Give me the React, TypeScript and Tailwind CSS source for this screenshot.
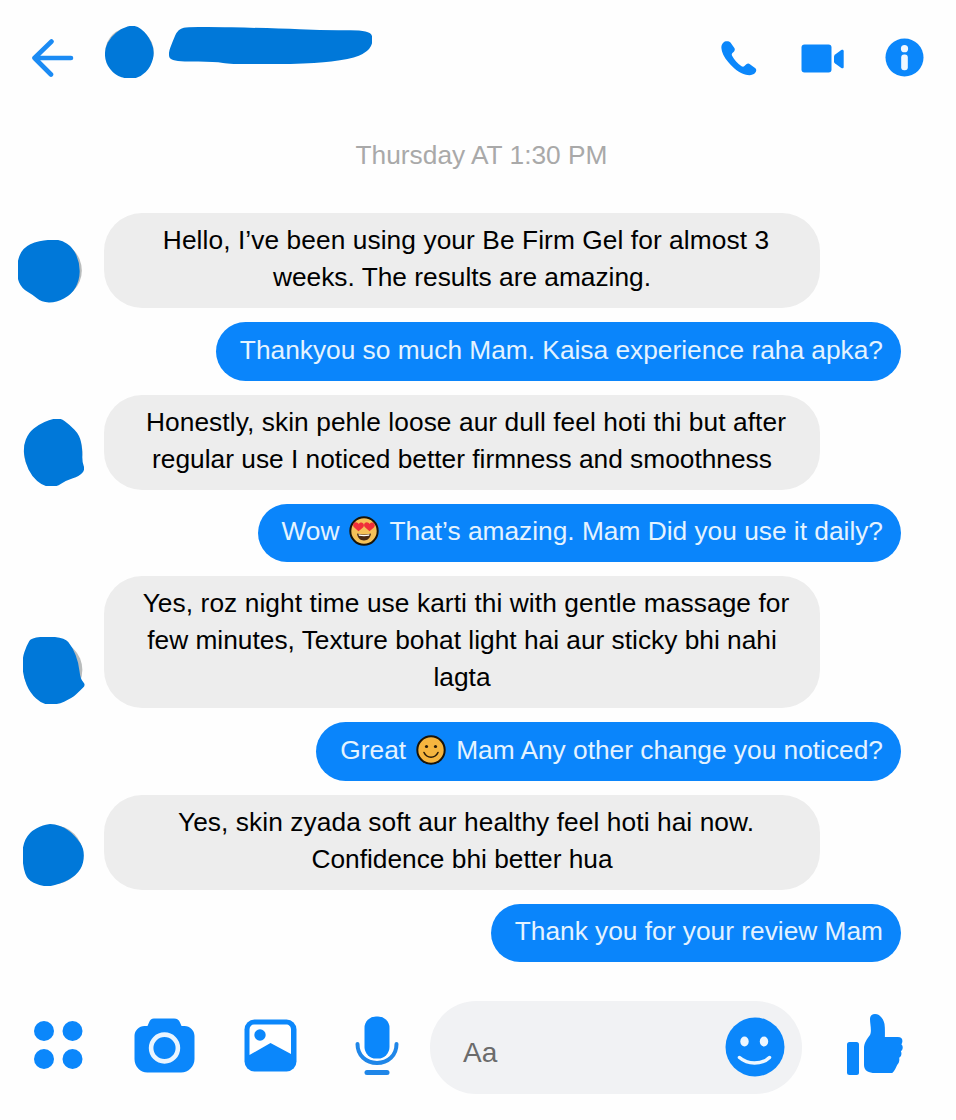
import React from "react";

const BLUE = "#0b87fb";
const INK = "#0078d9";
type P = [number, number];

function smooth(pts: P[]) {
  const mid = (a: P, b: P): P => [(a[0] + b[0]) / 2, (a[1] + b[1]) / 2];
  const n = pts.length;
  const s = mid(pts[n - 1], pts[0]);
  let d = `M${s[0]} ${s[1]}`;
  for (let i = 0; i < n; i++) {
    const m = mid(pts[i], pts[(i + 1) % n]);
    d += `Q${pts[i][0]} ${pts[i][1]} ${m[0]} ${m[1]}`;
  }
  return d + "Z";
}

function Blob({ pts, vb, w, h, ring, ml = 0, mt = 0 }: { pts: P[]; vb: string; w: number; h: number; ring?: [number, number, number]; ml?: number; mt?: number }) {
  return (
    <svg width={w} height={h} viewBox={vb} className="block shrink-0" style={{ marginLeft: ml, marginTop: mt }}>
      {ring && <circle cx={ring[0]} cy={ring[1]} r={ring[2]} fill="#b9bcbc" />}
      <path d={smooth(pts)} fill={INK} />
    </svg>
  );
}

function Back() {
  return (
    <svg width="42" height="38" viewBox="0 0 42 38" fill="none" stroke="#1b8bf4" strokeWidth="4.600" strokeLinecap="round" strokeLinejoin="round">
      <path d="M2.500 19H39M19.500 2.500 2.500 19 19 35.500" />
    </svg>
  );
}

function Phone() {
  return (
    <svg width="36" height="37" viewBox="0 0 38 38" fill={BLUE}>
      <path d="M5 .9C2.500 1.600.2 4.500.4 8c.3 4.500 2.600 9.500 7.400 15 5.400 6.600 11.600 11.500 18.500 13.200 4 1 7.600.4 9.600-1.800 1.600-1.600 1.800-3.600.4-5l-5.800-4.400c-1.200-.9-2.600-.8-3.800.2l-2 1.800c-.9.800-2 .8-3 .1-4.400-3-7.600-6.400-10-11-.5-1-.4-2 .4-2.800l1.700-1.800c1-1.100 1-2.400.3-3.600L10 2.200C8.800.8 6.800.4 5 .9Z" />
    </svg>
  );
}

function Video() {
  return (
    <svg width="44" height="30" viewBox="0 0 44 30" fill={BLUE}>
      <rect x="0.500" y="0.500" width="30" height="28" rx="3" />
      <path d="M33 12.600c0-.9.400-1.600 1.100-2.100l6.200-4.400c1.300-.9 2.400-.3 2.400 1.200v15.400c0 1.500-1.100 2.100-2.400 1.200l-6.200-4.400c-.7-.5-1.100-1.200-1.100-2.100Z" />
    </svg>
  );
}

function Info() {
  return (
    <svg width="39" height="39" viewBox="0 0 40 40" className="block">
      <circle cx="20" cy="20" r="19.500" fill={BLUE} />
      <circle cx="20" cy="11" r="3.700" fill="#eef7ff" />
      <rect x="16.600" y="17" width="6.800" height="16" rx="3" fill="#eef7ff" />
    </svg>
  );
}

function Dots() {
  return (
    <svg width="50" height="50" viewBox="0 0 50 50" fill={BLUE} className="block">
      <circle cx="10" cy="10" r="10" />
      <circle cx="38.500" cy="10" r="10" />
      <circle cx="10" cy="38" r="10" />
      <circle cx="38.500" cy="38" r="10" />
    </svg>
  );
}

function Camera() {
  return (
    <svg width="61" height="55" viewBox="0 0 61 55" className="block">
      <path fill={BLUE} d="M20 .5h20c3 0 5 1.500 6 4l1.500 3.500h3c5.500 0 10 4.500 10 10v23c0 7.500-6 13.500-13.500 13.500H13.500C6 54.500.5 48.500.5 41V18C.5 12.500 5 8 10.500 8h3L15 4.500C16 2 17.500.5 20 .5Z" />
      <circle cx="30.500" cy="30" r="13.400" fill="none" stroke="#eaf5ff" strokeWidth="4.600" />
    </svg>
  );
}

function ImageIcon() {
  return (
    <svg width="53" height="53" viewBox="0 0 53 53" className="block">
      <rect x="0.500" y="0.500" width="52" height="52" rx="10" fill={BLUE} />
      <path fill="#fff" d="M10 5.500h32c3 0 5 2 5 5V35L26.500 24 5.500 36V10.500c0-3 2-5 4.500-5Z" />
      <circle cx="16" cy="16" r="5.700" fill={BLUE} />
    </svg>
  );
}

function Mic() {
  return (
    <svg width="44" height="60" viewBox="0 0 44 60" fill="none" className="block">
      <rect x="9.500" y="0.500" width="25" height="42" rx="11.500" fill={BLUE} />
      <path d="M2.500 28c0 11.500 8.500 19 19.500 19s19.500-7.500 19.500-19" stroke="#1f86e8" strokeWidth="4" strokeLinecap="round" />
      <rect x="9.500" y="54" width="25" height="5" rx="2.500" fill="#1f86e8" />
    </svg>
  );
}

function Smile() {
  return (
    <svg width="60" height="60" viewBox="0 0 60 60" fill="none" className="mb-[2px] block">
      <circle cx="30" cy="30" r="29.500" fill={BLUE} />
      <ellipse cx="19.500" cy="24.500" rx="4.200" ry="5" fill="#eef7ff" />
      <ellipse cx="39" cy="24.500" rx="4.200" ry="5" fill="#eef7ff" />
      <path d="M14.500 40.500c4 3.500 9 5.500 15 5.500s11.500-2 15-5.500" stroke="#eef7ff" strokeWidth="3.500" strokeLinecap="round" />
    </svg>
  );
}

function Thumb() {
  return (
    <svg width="57" height="61" viewBox="0 0 57 61" fill={BLUE} className="block">
      <rect x="0" y="28" width="12" height="33" rx="2.500" />
      <path d="M23 5c0-3 2-5 5-5 5 0 8.500 5 9.500 10 .6 4 .4 9 .4 13h13c3 0 4.500 1.500 4.500 4 0 1.500-.6 2.500-1 3.500 1.200 1 1.500 2.500 1.200 4-.3 1.500-1 2.200-1.700 2.800.6 1.200.7 2.500.3 4-.4 1.200-1.200 2-2 2.500.4 2.500 0 5-1.500 6.500-1.300 1.500-3.500 8.700-6 8.700H28c-6 0-11-2-11-8V34c0-5 3-9 6-13 2-4 0-11 0-16Z" />
    </svg>
  );
}

const emojiCls = "mx-[10px] inline-block -mt-[4px] -mb-[6px] align-baseline";

function LoveEmoji() {
  return (
    <svg width="30" height="30" viewBox="0 0 30 30" className={emojiCls}>
      <circle cx="15" cy="15" r="13.700" fill="#f5c158" stroke="#1a1408" strokeWidth="2" />
      <path fill="#f0303a" d="M9.500 15.200 5 11.200C3.300 9.400 4.400 6.400 6.800 6.300c1.300 0 2.300.7 2.800 1.800.5-1.100 1.600-1.800 2.900-1.700 2.400.3 3.300 3.300 1.500 5Z" />
      <path fill="#f0303a" d="M20.500 15.200 16 11.200c-1.800-1.800-.7-4.800 1.700-4.900 1.300 0 2.300.7 2.800 1.800.5-1.100 1.600-1.800 2.900-1.700 2.400.3 3.300 3.300 1.500 5Z" />
      <path fill="#4a2a14" d="M8 17.500c4.500 1.300 9.500 1.300 14 0-.4 4.200-3.200 7-7 7s-6.600-2.800-7-7Z" />
      <path fill="#fff" d="M9.500 18.300c3.600.8 7.400.8 11 0l-.4 1.400c-3.300.6-6.900.6-10.200 0Z" />
    </svg>
  );
}

function SmileEmoji() {
  return (
    <svg width="30" height="30" viewBox="0 0 30 30" className={emojiCls}>
      <circle cx="15" cy="15" r="13.700" fill="#f5b53f" stroke="#1a1408" strokeWidth="2" />
      <circle cx="10.500" cy="11.500" r="1.600" fill="#2a1c08" />
      <circle cx="19.500" cy="11.500" r="1.600" fill="#2a1c08" />
      <path d="M8 17.500c1.500 3.200 4 4.700 7 4.700s5.500-1.500 7-4.700" fill="none" stroke="#2a1c08" strokeWidth="1.600" strokeLinecap="round" />
    </svg>
  );
}

const headAv: P[] = [[365, 84], [405, 72], [442, 100], [466, 150], [454, 200], [422, 232], [385, 238], [345, 226], [316, 188], [314, 145], [332, 110]];
const namePts: P[] = [[535, 85], [570, 78], [820, 83], [980, 90], [1110, 88], [1122, 120], [1105, 155], [1050, 176], [940, 190], [700, 193], [640, 182], [515, 184], [505, 160], [518, 125]];
const av1: P[] = [[150, 88], [185, 90], [220, 112], [241, 160], [240, 212], [216, 254], [170, 279], [125, 278], [98, 254], [66, 236], [50, 200], [55, 135], [88, 100]];
const av2: P[] = [[150, 628], [180, 622], [208, 642], [240, 675], [248, 720], [247, 755], [256, 778], [238, 798], [200, 810], [165, 832], [128, 826], [96, 798], [76, 757], [70, 708], [86, 667], [118, 642]];
const av3: P[] = [[97, 50], [193, 50], [220, 82], [238, 130], [243, 178], [260, 195], [243, 212], [218, 236], [170, 256], [128, 254], [91, 219], [71, 172], [67, 118], [81, 76]];
const av4: P[] = [[130, 613], [160, 610], [203, 626], [244, 668], [254, 705], [244, 749], [208, 780], [150, 801], [118, 796], [82, 780], [68, 742], [65, 680], [86, 636]];

function Left({ lines, avatar, h, mb }: { lines: string[]; avatar: React.ReactNode; h: number; mb: number }) {
  return (
    <div className="flex items-end">
      <div className="w-[104px] shrink-0" style={{ marginBottom: mb }}>{avatar}</div>
      <div className="w-[716px] rounded-[38px] bg-[#ededed] py-[9px] text-center text-black" style={{ height: h }}>
        {lines.map((l, i) => (
          <div key={l} className={i === 0 ? "pl-[8px] tracking-[0.08px]" : ""}>{l}</div>
        ))}
      </div>
    </div>
  );
}

function Right({ children }: { children: React.ReactNode }) {
  return (
    <div className="flex justify-end pr-[55px]">
      <div className="flex h-[58.5px] items-center whitespace-pre rounded-[30px] bg-[#0a85fb] pb-[2px] pl-[24px] pr-[18px] text-[#e4f3ff]">
        <div>{children}</div>
      </div>
    </div>
  );
}

export default function App() {
  return (
    <div className="flex h-[1120px] w-[956px] flex-col overflow-hidden bg-[#fefefe] font-['Liberation_Sans',Arial,sans-serif] text-[26.3px] leading-[37px]">
      <header className="flex h-[132px] shrink-0 items-start">
        <div className="ml-[32px] mt-[39px]"><Back /></div>
        <Blob pts={headAv} vb="315 78 148 155" w={49} h={52} ml={31} mt={26} ring={[389, 155, 73]} />
        <Blob pts={namePts} vb="508 80 609 110" w={203} h={37} ml={15} mt={27} />
        <div className="ml-[349px] mt-[40px]"><Phone /></div>
        <div className="ml-[44px] mt-[44px]"><Video /></div>
        <div className="ml-[40px] mt-[38px]"><Info /></div>
      </header>

      <div className="h-[81px] shrink-0 pl-[7px] pt-[5px] text-center text-[#a9a9a9]">Thursday AT 1:30 PM</div>

      <main className="flex flex-col gap-[14px]">
        <Left h={95} mb={5} avatar={<Blob pts={av1} vb="55 90 195 190" w={65} h={63} ml={18} ring={[160, 182, 87]} />} lines={["Hello, I’ve been using your Be Firm Gel for almost 3", "weeks. The results are amazing."]} />
        <Right>Thankyou so much Mam. Kaisa experience raha apka?</Right>
        <Left h={95} mb={4} avatar={<Blob pts={av2} vb="70 626 182 201" w={61} h={67} ml={23} ring={[160, 725, 88]} />} lines={["Honestly, skin pehle loose aur dull feel hoti thi but after", "regular use I noticed better firmness and smoothness"]} />
        <Right>Wow<LoveEmoji />That’s amazing. Mam Did you use it daily?</Right>
        <Left h={132} mb={4} avatar={<Blob pts={av3} vb="70 52 187 200" w={62} h={67} ml={23} ring={[160, 150, 89]} />} lines={["Yes, roz night time use karti thi with gentle massage for", "few minutes, Texture bohat light hai aur sticky bhi nahi", "lagta"]} />
        <Right>Great<SmileEmoji />Mam Any other change you noticed?</Right>
        <Left h={95} mb={4} avatar={<Blob pts={av4} vb="68 612 184 185" w={61} h={62} ml={23} ring={[160, 704, 89]} />} lines={["Yes, skin zyada soft aur healthy feel hoti hai now.", "Confidence bhi better hua"]} />
        <Right>Thank you for your review Mam</Right>
      </main>

      <footer className="mt-[39px] flex items-center pl-[34px]">
        <div className="-mt-[4px]"><Dots /></div>
        <div className="-mt-[4px] ml-[50px]"><Camera /></div>
        <div className="-mt-[4px] ml-[49px]"><ImageIcon /></div>
        <div className="-mt-[4px] ml-[58px]"><Mic /></div>
        <div className="ml-[31px] flex h-[93px] w-[372px] items-center justify-between rounded-[46px] bg-[#f1f2f4] pl-[33px] pr-[17px] text-[28px] text-[#6b6b6b]">
          <span className="mt-[10px]">Aa</span>
          <Smile />
        </div>
        <div className="-mt-[6px] ml-[45px]"><Thumb /></div>
      </footer>
    </div>
  );
}
